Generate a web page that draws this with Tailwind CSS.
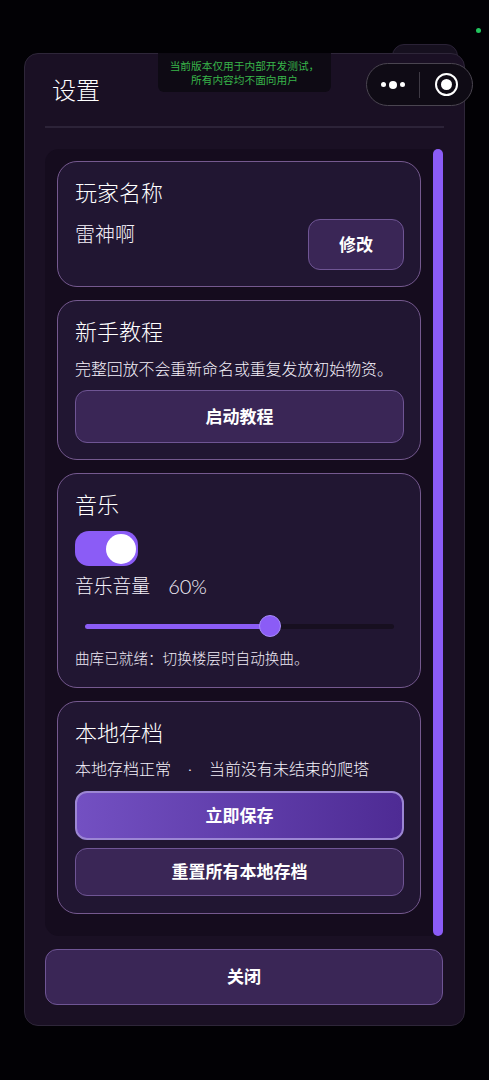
<!DOCTYPE html>
<html lang="zh-CN">
<head>
    <meta charset="UTF-8">
    <meta name="viewport" content="width=device-width, initial-scale=1.0">
    <title>设置</title>
    <script src="https://cdn.jsdelivr.net/npm/@tailwindcss/browser@4"></script>
</head>
<body class="bg-[#020105] font-['Lato','Noto_Sans_CJK_SC',sans-serif] font-light text-white">
    <div class="relative w-[489px] h-[1080px] overflow-hidden pt-[53px] pl-[24px]">
        <!-- status dot + tab behind the capsule -->
        <div class="absolute left-[476px] top-[28px] w-[5px] h-[5px] rounded-full bg-[#22c55e]"></div>
        <div class="absolute left-[392px] top-[44px] w-[66px] h-[20px] rounded-t-[12px] border border-[#2a2236] bg-[#16101f]"></div>

        <!-- panel -->
        <div class="relative w-[441px] h-[973px] rounded-[14px] border border-[#2e2639] bg-[#1a1024] px-[20px] flex flex-col">
            <div class="h-[74px] shrink-0 flex items-center pl-[7px] border-b-2 border-[#2c2338]">
                <h1 class="text-[24px] leading-[32px] -mt-[1px]">设置</h1>
            </div>

            <div class="mt-[21px] h-[787px] shrink-0 flex">
                <div class="w-[388px] h-full bg-[#150c1e] rounded-l-[14px] pl-[12px] pt-[12px] flex flex-col gap-[13px]">
                    <section class="w-[364px] h-[126px] rounded-[20px] border-[1.5px] border-[#75598f] bg-[#211632] pl-[17px] pr-[16px] pt-[15px] flex flex-col relative">
                        <h2 class="text-[22px] leading-[32px]">玩家名称</h2>
                        <p class="mt-[11px] text-[20px] leading-[28px] text-[#f5f1fa]">雷神啊</p>
                        <button class="absolute right-[16px] top-[57px] w-[96px] h-[51px] rounded-[12px] border-[1.5px] border-[#6f5594] bg-[#3a2656] text-[17px] font-bold text-white">修改</button>
                    </section>

                    <section class="w-[364px] h-[160px] rounded-[20px] border-[1.5px] border-[#75598f] bg-[#211632] pl-[17px] pr-[16px] pt-[15px] flex flex-col">
                        <h2 class="text-[22px] leading-[32px]">新手教程</h2>
                        <p class="mt-[9px] text-[15.9px] leading-[24px] whitespace-nowrap text-[#f5f1fa]">完整回放不会重新命名或重复发放初始物资。</p>
                        <button class="mt-[9px] w-full h-[53px] rounded-[12px] border-[1.5px] border-[#6f5594] bg-[#3a2656] text-[17px] font-bold text-white">启动教程</button>
                    </section>

                    <section class="w-[364px] h-[215px] rounded-[20px] border-[1.5px] border-[#75598f] bg-[#211632] pl-[17px] pr-[16px] pt-[15px] flex flex-col">
                        <h2 class="text-[22px] leading-[32px]">音乐</h2>
                        <div class="mt-[10px] w-[63px] h-[35px] rounded-[14px] bg-[#8b5cf6] flex items-center justify-end pr-[2px]">
                            <div class="w-[30px] h-[30px] rounded-full bg-white"></div>
                        </div>
                        <div class="mt-[7px] flex items-center h-[26px] text-[#f5f1fa]">
                            <span class="text-[18.8px]">音乐音量</span>
                            <span class="ml-[18px] text-[20px]">60%</span>
                        </div>
                        <div class="mt-[15px] ml-[10px] w-[309px] h-[24px] relative flex items-center">
                            <div class="w-full h-[5px] rounded-full bg-[#170f20]">
                                <div class="w-[184px] h-full rounded-full bg-[#8b5cf6]"></div>
                            </div>
                            <div class="absolute left-[174px] top-[1px] w-[22px] h-[22px] rounded-full bg-[#8b5cf6] border border-[#a78bfa]"></div>
                        </div>
                        <p class="mt-[10px] text-[14.6px] leading-[22px] text-[#f0ebf6]">曲库已就绪：切换楼层时自动换曲。</p>
                    </section>

                    <section class="w-[364px] h-[213px] rounded-[20px] border-[1.5px] border-[#75598f] bg-[#211632] pl-[17px] pr-[16px] pt-[15px] flex flex-col">
                        <h2 class="text-[22px] leading-[32px]">本地存档</h2>
                        <p class="mt-[8px] text-[16px] leading-[24px] whitespace-nowrap text-[#f5f1fa]">本地存档正常<span class="mx-[17px]">·</span>当前没有未结束的爬塔</p>
                        <button class="mt-[10px] w-full h-[49px] rounded-[12px] border-2 border-[#9c86d4] bg-gradient-to-r from-[#7350c2] to-[#4e2b94] text-[17px] font-bold text-white">立即保存</button>
                        <button class="mt-[8px] w-full h-[48px] rounded-[12px] border-[1.5px] border-[#6f5594] bg-[#3a2656] text-[17px] font-bold text-white">重置所有本地存档</button>
                    </section>
                </div>
                <div class="w-[10px] h-full rounded-full bg-[#8b5cf6]"></div>
            </div>

            <button class="mt-[13px] w-[398px] h-[56px] shrink-0 rounded-[12px] border-[1.5px] border-[#6f5594] bg-[#3a2656] text-[17px] font-bold text-white">关闭</button>
        </div>

        <!-- dev build notice -->
        <div class="absolute left-[158px] top-[53px] w-[173px] h-[39px] rounded-b-[6px] bg-[#0e0a14] flex flex-col items-center justify-center font-normal text-[10.7px] leading-[14px] text-[#38b54a] whitespace-nowrap">
            <span>当前版本仅用于内部开发测试，</span>
            <span>所有内容均不面向用户</span>
        </div>

        <!-- mini program capsule -->
        <div class="absolute left-[366px] top-[63px] w-[107px] h-[43px] rounded-full border border-[#4a4550] bg-[#0f0b15] flex items-center">
            <div class="w-[52px] flex items-center justify-center gap-[3px]">
                <span class="w-[5px] h-[5px] rounded-full bg-white"></span>
                <span class="w-[8px] h-[8px] rounded-full bg-white"></span>
                <span class="w-[5px] h-[5px] rounded-full bg-white"></span>
            </div>
            <div class="w-px h-[26px] bg-[#3e3a44]"></div>
            <div class="flex-1 flex items-center justify-center">
                <div class="w-[23px] h-[23px] rounded-full border-[2.5px] border-white flex items-center justify-center">
                    <div class="w-[11px] h-[11px] rounded-full bg-white"></div>
                </div>
            </div>
        </div>
    </div>
</body>
</html>
